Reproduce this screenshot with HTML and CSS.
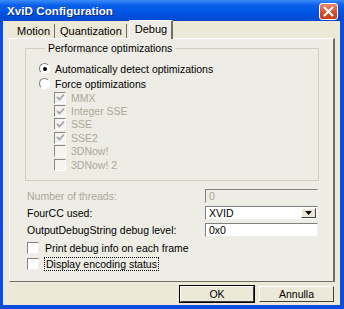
FILE: index.html
```html
<!DOCTYPE html>
<html lang="it">
<head>
    <meta charset="UTF-8">
    <title>XviD Configuration</title>
    <link rel="stylesheet" href="styles.css">
</head>
<body>
    <div class="window">
        <div class="titlebar">
            <span class="title">XviD Configuration</span>
            <span class="close-btn">
                <svg width="13" height="11" viewBox="0 0 13 11"><path d="M2 1 L11 10 M11 1 L2 10" stroke="#fff" stroke-width="2.2" fill="none"/></svg>
            </span>
        </div>
        <div class="client">
            <div class="tabs">
                <span class="tab">Motion</span>
                <span class="tab">Quantization</span>
                <span class="tab active">Debug</span>
            </div>
            <div class="panel">
                <fieldset class="group">
                    <legend>Performance optimizations</legend>
                    <div class="opt"><span class="radio checked"></span>Automatically detect optimizations</div>
                    <div class="opt"><span class="radio"></span>Force optimizations</div>
                    <div class="sub disabled"><span class="check on"><svg width="9" height="9" viewBox="0 0 9 9"><path d="M1 4 L3.5 6.5 L8 1.5" stroke="#a7a6aa" stroke-width="1.8" fill="none"/></svg></span>MMX</div>
                    <div class="sub disabled"><span class="check on"><svg width="9" height="9" viewBox="0 0 9 9"><path d="M1 4 L3.5 6.5 L8 1.5" stroke="#a7a6aa" stroke-width="1.8" fill="none"/></svg></span>Integer SSE</div>
                    <div class="sub disabled"><span class="check on"><svg width="9" height="9" viewBox="0 0 9 9"><path d="M1 4 L3.5 6.5 L8 1.5" stroke="#a7a6aa" stroke-width="1.8" fill="none"/></svg></span>SSE</div>
                    <div class="sub disabled"><span class="check on"><svg width="9" height="9" viewBox="0 0 9 9"><path d="M1 4 L3.5 6.5 L8 1.5" stroke="#a7a6aa" stroke-width="1.8" fill="none"/></svg></span>SSE2</div>
                    <div class="sub disabled"><span class="check"></span>3DNow!</div>
                    <div class="sub disabled"><span class="check"></span>3DNow! 2</div>
                </fieldset>

                <div class="fields">
                    <span class="disabled">Number of threads:</span>
                    <span class="field field-off">0</span>
                    <span>FourCC used:</span>
                    <span class="field combo">XVID<span class="drop"><svg width="7" height="4" viewBox="0 0 7 4"><path d="M0 0 H7 L3.5 4 Z" fill="#000"/></svg></span></span>
                    <span>OutputDebugString debug level:</span>
                    <span class="field">0x0</span>
                </div>

                <div class="flags">
                    <div class="flag"><span class="check white"></span>Print debug info on each frame</div>
                    <div class="flag"><span class="check white"></span><span class="focus">Display encoding status</span></div>
                </div>
            </div>
            <div class="buttons">
                <span class="btn default">OK</span>
                <span class="btn">Annulla</span>
            </div>
        </div>
    </div>
</body>
</html>
```

FILE: styles.css
```css
body {
    margin: 0;
    font-family: 'Liberation Sans', Arial, sans-serif;
    font-size: 10.5px;
    color: #000;
    background: #fff;
}
.window {
    width: 344px;
    height: 309px;
    box-sizing: border-box;
    display: flex;
    flex-direction: column;
    background: #0a4ee0;
    padding: 0 4px 4px 3px;
}
.titlebar {
    height: 21px;
    margin: 0 -4px 0 -3px;
    padding: 0 6px 0 7px;
    display: flex;
    align-items: center;
    justify-content: space-between;
    background: linear-gradient(#3b8cf8 0%, #0a5fea 25%, #0054e3 60%, #0048cf 100%);
}
.title {
    color: #fff;
    font-weight: bold;
    font-size: 11.5px;
    letter-spacing: 0.1px;
    text-shadow: 1px 1px 0 #0a2e8a;
}
.close-btn {
    width: 19px;
    height: 17px;
    box-sizing: border-box;
    border: 1px solid #fff;
    border-radius: 3px;
    background: linear-gradient(#e88a6c, #d44a25 60%, #c4401d);
    display: flex;
    align-items: center;
    justify-content: center;
    margin-top: 1px;
}
.client {
    flex: 1;
    background: #ece9d8;
    display: flex;
    flex-direction: column;
    padding: 0 5px 0 6px;
}
.tabs {
    height: 17px;
    display: flex;
    align-items: flex-end;
    padding-left: 3px;
}
.tab {
    height: 14px;
    line-height: 14px;
    padding: 0 4px 0 5px;
    border-right: 1px solid #716f64;
    font-size: 11px;
}
.tab.active {
    height: 18px;
    line-height: 17px;
    margin-bottom: -1px;
    padding: 0 4px 0 5px;
    border-left: 1px solid #fff;
    border-top: 1px solid #fff;
    border-right: 2px solid #716f64;
    background: #eeede5;
    position: relative;
    z-index: 1;
    margin-left: 2px;
}
.panel {
    height: 244px;
    box-sizing: border-box;
    background: #eeede5;
    border-top: 1px solid #fff;
    border-left: 1px solid #fff;
    border-right: 2px solid #716f64;
    border-bottom: 1px solid #716f64;
    padding: 3px 14px 0 15px;
}
.group {
    margin: 0;
    height: 139px;
    box-sizing: border-box;
    border: 1px solid #d0d0bf;
    border-radius: 0;
    padding: 7px 0 0 13px;
}
.group legend {
    padding: 0 3px;
    margin-left: 6px;
}
.opt {
    height: 15px;
    display: flex;
    align-items: center;
}
.sub {
    height: 13.4px;
    display: flex;
    align-items: center;
    padding-left: 15px;
}
.disabled {
    color: #aca899;
}
.radio {
    width: 11px;
    height: 11px;
    box-sizing: border-box;
    border-radius: 50%;
    border: 1px solid;
    border-color: #808080 #fff #fff #808080;
    background: #fff;
    margin-right: 5px;
    display: flex;
    align-items: center;
    justify-content: center;
}
.radio.checked::after {
    content: "";
    width: 4px;
    height: 4px;
    border-radius: 50%;
    background: #000;
}
.check {
    width: 12px;
    height: 12px;
    box-sizing: border-box;
    border: 1px solid;
    border-color: #8a8a8a #fff #fff #8a8a8a;
    background: #f4f3ee;
    margin-right: 5px;
    display: flex;
    align-items: center;
    justify-content: center;
}
.check.white {
    background: #fff;
    border-color: #808080 #f0f0f0 #f0f0f0 #808080;
}
.fields {
    display: grid;
    grid-template-columns: 178px 113px;
    grid-auto-rows: 17px;
    align-items: center;
    margin-top: 6px;
    padding-left: 2px;
}
.field {
    height: 14px;
    box-sizing: border-box;
    background: #fff;
    border: 1px solid;
    border-color: #808080 #f0f0f0 #f0f0f0 #808080;
    padding-left: 3px;
    line-height: 12px;
    display: flex;
    align-items: center;
}
.field-off {
    background: #eeede5;
    color: #aca899;
}
.combo {
    justify-content: space-between;
    padding-right: 1px;
}
.drop {
    width: 15px;
    height: 10px;
    box-sizing: border-box;
    background: #ece9d8;
    border: 1px solid;
    border-color: #fff #404040 #404040 #fff;
    display: flex;
    align-items: center;
    justify-content: center;
}
.flags {
    margin-top: 2px;
}
.flag {
    height: 16px;
    display: flex;
    align-items: center;
    padding-left: 2px;
}
.flag .check {
    margin-right: 6px;
}
.focus {
    outline: 1px dotted #000;
    padding: 0 1px;
}
.buttons {
    display: flex;
    justify-content: flex-end;
    gap: 5px;
    padding: 4px 1px 0 0;
}
.btn {
    width: 75px;
    height: 16px;
    box-sizing: border-box;
    border: 1px solid;
    border-color: #fff #404040 #404040 #fff;
    display: flex;
    align-items: center;
    justify-content: center;
    background: #ece9d8;
}
.btn.default {
    outline: 1px solid #000;
    outline-offset: 0;
    width: 74px;
}
```
